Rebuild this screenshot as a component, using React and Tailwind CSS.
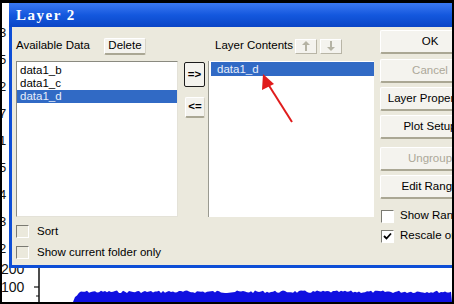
import React from 'react'

const font = { fontFamily: '"Liberation Sans", Arial, sans-serif' }

const XpButton = ({ children, disabled, className = '' }) => (
  <div
    className={`flex items-center justify-center rounded-[2px] bg-[#f4f3ee] border border-t-white border-l-white border-r-[#d6d3c6] border-b-2 border-b-[#aaa794] text-[11.5px] leading-none ${
      disabled ? 'text-[#aca899]' : 'text-black'
    } ${className}`}
  >
    {children}
  </div>
)

const Check = ({ checked, white }) => (
  <div
    className={`w-[13px] h-[13px] shrink-0 border border-t-[#7a7a72] border-l-[#7a7a72] border-r-white border-b-white ${
      white ? 'bg-white' : 'bg-[#ebe9dc]'
    } flex items-center justify-center`}
  >
    {checked && (
      <svg width="9" height="9" viewBox="0 0 9 9">
        <path d="M1 4 L3.5 6.5 L8 1.5" stroke="#000" strokeWidth="1.8" fill="none" />
      </svg>
    )}
  </div>
)

const ArrowBtn = ({ up }) => (
  <div className="w-[22px] h-[15px] flex items-center justify-center bg-[#f4f3ee] border border-t-white border-l-white border-r-[#b8b5a6] border-b-[#b8b5a6]">
    <svg width="12" height="12" viewBox="0 0 12 12">
      {up ? (
        <path d="M6 1 L10 5 H7 V11 H5 V5 H2 Z" fill="#b5b3a4" />
      ) : (
        <path d="M6 11 L10 7 H7 V1 H5 V7 H2 Z" fill="#b5b3a4" />
      )}
    </svg>
  </div>
)

function plotPoints() {
  const pts = ['73,302']
  let seed = 7
  for (let x = 75; x <= 452; x += 2) {
    seed = (seed * 9301 + 49297) % 233280
    const r = seed / 233280
    const base = x < 82 ? 290 + (82 - x) * 0.8 : 290.5
    pts.push(`${x},${(base + r * 2.6).toFixed(1)}`)
  }
  pts.push('452,302')
  return pts.join(' ')
}

// fragments of another plot's axis labels peeking out at the left edge
const edgeDigits = ['3', '5', '2', '7', '1', '5', '4', '3', '2']

export default function App() {
  return (
    <div className="relative w-[454px] h-[304px] overflow-hidden bg-black" style={font}>
      {/* plot window behind the dialog */}
      <div className="absolute left-[2px] top-[3px] right-[2px] bottom-[2px] bg-white overflow-hidden">
        <svg className="absolute left-0 top-0" width="450" height="299" viewBox="2 3 450 299">
          {edgeDigits.map((d, i) => (
            <text key={i} x="-1" y={37 + i * 27} fontSize="13" fill="#111" style={font}>
              {d}
            </text>
          ))}
          <text x="1" y="274" fontSize="14" fill="#111" style={font}>200</text>
          <text x="1" y="292" fontSize="14" fill="#111" style={font}>100</text>
          <line x1="39" y1="262" x2="39" y2="302" stroke="#111" strokeWidth="1.5" />
          <line x1="34" y1="287" x2="39" y2="287" stroke="#111" strokeWidth="1.2" />
          <line x1="36" y1="296" x2="39" y2="296" stroke="#111" strokeWidth="1" />
          <polygon points={plotPoints()} fill="#1010e0" />
        </svg>
      </div>

      {/* dialog */}
      <div className="absolute left-[9px] top-[3px] w-[520px] h-[265px] flex flex-col">
        <div className="h-[24px] shrink-0 bg-gradient-to-b from-[#3a78f2] via-[#1458de] to-[#0a45c6] flex items-center pl-[7px]">
          <span
            className="text-white font-bold text-[15px] tracking-[1.5px] leading-none"
            style={{ fontFamily: '"Liberation Serif", "Times New Roman", serif' }}
          >
            Layer 2
          </span>
        </div>
        <div className="flex-1 bg-[#ebe9dd] border-l-[3px] border-b-[3px] border-[#0d4ed6] flex pl-[4px]">
          {/* available data */}
          <div className="w-[162px] flex flex-col pt-[11px]">
            <div className="h-[16px] flex items-center">
              <span className="text-[11.5px] text-black">Available Data</span>
              <XpButton className="ml-[14px] w-[42px] h-[17px]">Delete</XpButton>
            </div>
            <div className="mt-[7px] h-[156px] bg-white border border-t-[#8a8a80] border-l-[#8a8a80] border-r-[#e4e2d8] border-b-[#e4e2d8] pt-[2px] text-[11.5px] leading-[13px]">
              <div className="pl-[3px] text-black">data1_b</div>
              <div className="pl-[3px] text-black">data1_c</div>
              <div className="pl-[3px] bg-[#316ac5] text-[#e8eefa]">data1_d</div>
            </div>
            <div className="mt-[8px] flex items-center gap-[8px] h-[13px]">
              <Check />
              <span className="text-[11.5px] text-black">Sort</span>
            </div>
            <div className="mt-[8px] flex items-center gap-[8px] h-[13px]">
              <Check />
              <span className="text-[11.5px] text-black">Show current folder only</span>
            </div>
          </div>

          {/* move buttons */}
          <div className="w-[21px] ml-[6px] flex flex-col pt-[35px]">
            <XpButton className="h-[25px] !border !border-[#1c1c1c] text-[10px] font-bold">=&gt;</XpButton>
            <XpButton className="mt-[10px] ml-[1px] h-[21px] text-[10px] font-bold">&lt;=</XpButton>
          </div>

          {/* layer contents */}
          <div className="w-[166px] ml-[3px] flex flex-col pt-[11px]">
            <div className="h-[16px] flex items-center pl-[7px]">
              <span className="text-[11.5px] text-black">Layer Contents</span>
              <div className="ml-[2px] flex gap-[3px]">
                <ArrowBtn up />
                <ArrowBtn />
              </div>
            </div>
            <div className="mt-[7px] h-[156px] bg-white border-l border-l-[#9a9a90] pt-[1px] pl-[2px] text-[11.5px] leading-[14px]">
              <div className="pl-[6px] bg-[#316ac5] text-[#e8eefa]">data1_d</div>
            </div>
          </div>

          {/* action buttons */}
          <div className="w-[100px] ml-[6px] flex flex-col pt-[3px]">
            <XpButton className="h-[24px]">OK</XpButton>
            <XpButton className="mt-[5px] h-[24px]" disabled>Cancel</XpButton>
            <XpButton className="mt-[4px] h-[24px]">Layer Properties</XpButton>
            <XpButton className="mt-[4px] h-[24px]">Plot Setup</XpButton>
            <XpButton className="mt-[8px] h-[24px]" disabled>Ungroup</XpButton>
            <XpButton className="mt-[4px] h-[24px]">Edit Range</XpButton>
            <div className="mt-[10px] flex items-center gap-[6px] h-[14px] pl-[1px]">
              <Check white />
              <span className="text-[11.5px] text-black">Show Range</span>
            </div>
            <div className="mt-[6px] flex items-center gap-[6px] h-[14px] pl-[1px]">
              <Check white checked />
              <span className="text-[11.5px] text-black">Rescale on</span>
            </div>
          </div>
        </div>
      </div>

      {/* red annotation arrow */}
      <svg className="absolute left-0 top-0 pointer-events-none" width="454" height="304">
        <line x1="292" y1="122" x2="268" y2="84" stroke="#e01c1c" strokeWidth="2" />
        <polygon points="263,74 274,84 262,90" fill="#e01c1c" />
      </svg>

      {/* right screenshot frame */}
      <div className="absolute right-0 top-0 w-[2px] h-full bg-black" />
    </div>
  )
}
